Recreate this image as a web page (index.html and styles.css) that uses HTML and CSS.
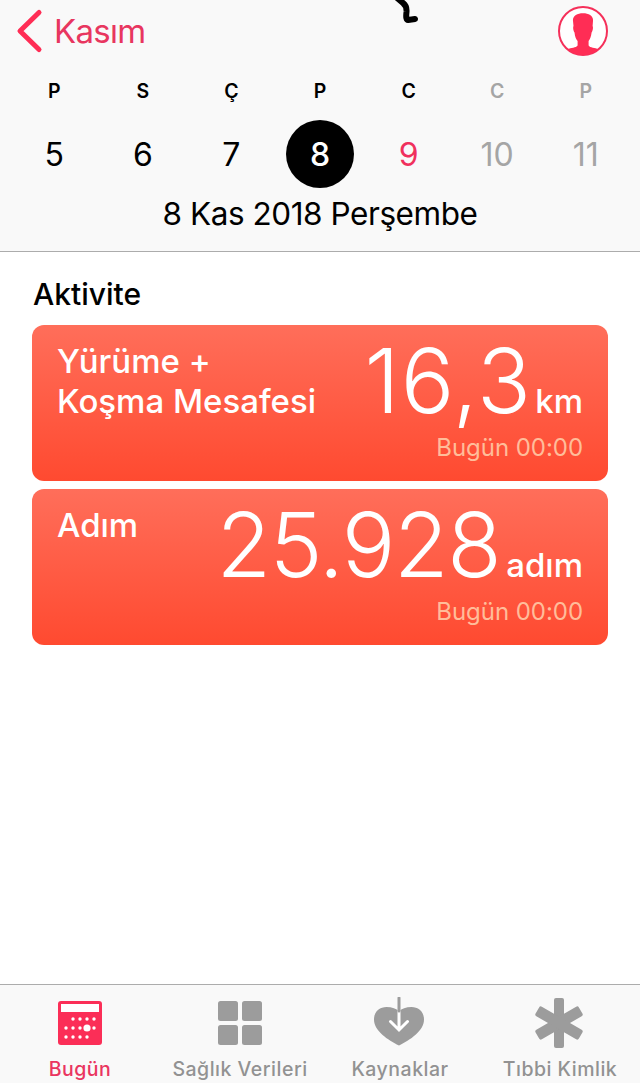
FILE: index.html
```html
<!DOCTYPE html>
<html lang="tr">
<head>
  <meta charset="UTF-8">
  <meta name="viewport" content="width=device-width, initial-scale=1.0">
  <title>Sağlık</title>
  <link rel="stylesheet" href="styles.css">
</head>
<body>
  <header class="header">
    <svg class="scribble" width="30" height="26" viewBox="0 0 30 26">
      <path d="M2 -3 L9 3 Q13 6 12.500 12 Q11.500 20 14 20 L21 19" />
    </svg>
    <div class="navbar">
      <a class="back" href="#">
        <svg width="28" height="46" viewBox="0 0 28 46">
          <path d="M23 4.500 L4 23 L23 41.500" />
        </svg>
        <span>Kasım</span>
      </a>
      <svg class="profile" width="50" height="50" viewBox="0 0 50 50">
        <circle cx="25" cy="25" r="24" />
        <path d="M25 7.200 C31 7.200 35.600 9.800 35 15 L34.600 20 C35.400 21 34.800 25 33.600 26.400 C33 31 32 33 30.600 35 V39.500 C32 42 37 41.500 40.500 43.300 A24 24 0 0 1 9.500 43.300 C13 41.500 18 42 19.600 39.500 V35 C18 33 17 31 16.500 26.400 C15.200 25 14.800 21 15.500 20 L15 15 C14.400 9.800 19 7.200 25 7.200 Z" />
      </svg>
    </div>
    <div class="week">
      <div class="day"><span class="day-name">P</span><span class="day-num">5</span></div>
      <div class="day"><span class="day-name">S</span><span class="day-num">6</span></div>
      <div class="day"><span class="day-name">Ç</span><span class="day-num">7</span></div>
      <div class="day selected"><span class="day-name">P</span><span class="day-num">8</span></div>
      <div class="day today"><span class="day-name">C</span><span class="day-num">9</span></div>
      <div class="day future"><span class="day-name">C</span><span class="day-num">10</span></div>
      <div class="day future"><span class="day-name">P</span><span class="day-num">11</span></div>
    </div>
    <p class="date">8 Kas 2018 Perşembe</p>
  </header>

  <main class="content">
    <h1>Aktivite</h1>
    <section class="card">
      <h2>Yürüme +<br>Koşma Mesafesi</h2>
      <div class="data">
        <p class="value"><span class="number distance">16,3</span><span class="unit">km</span></p>
        <p class="time">Bugün 00:00</p>
      </div>
    </section>
    <section class="card">
      <h2>Adım</h2>
      <div class="data">
        <p class="value"><span class="number">25.928</span><span class="unit">adım</span></p>
        <p class="time">Bugün 00:00</p>
      </div>
    </section>
  </main>

  <nav class="tabbar">
    <a class="tab active" href="#">
      <svg width="52" height="52" viewBox="0 0 52 52">
        <rect x="4" y="4" width="44" height="44" rx="3" />
        <g class="cut">
          <rect x="7" y="7" width="38" height="8" />
          <circle cx="19" cy="22" r="1.7" /><circle cx="26" cy="22" r="1.7" /><circle cx="33" cy="22" r="1.7" /><circle cx="40" cy="22" r="1.7" />
          <circle cx="12" cy="31" r="1.7" /><circle cx="19" cy="31" r="1.7" /><circle cx="26" cy="31" r="1.7" /><circle cx="33" cy="31" r="3.6" /><circle cx="40" cy="31" r="1.7" />
          <circle cx="12" cy="40" r="1.7" /><circle cx="19" cy="40" r="1.7" /><circle cx="26" cy="40" r="1.7" /><circle cx="33" cy="40" r="1.7" />
        </g>
      </svg>
      <span>Bugün</span>
    </a>
    <a class="tab" href="#">
      <svg width="52" height="52" viewBox="0 0 52 52">
        <rect x="4" y="4" width="20" height="20" rx="2.5" />
        <rect x="28" y="4" width="20" height="20" rx="2.5" />
        <rect x="4" y="28" width="20" height="20" rx="2.5" />
        <rect x="28" y="28" width="20" height="20" rx="2.5" />
      </svg>
      <span>Sağlık Verileri</span>
    </a>
    <a class="tab" href="#">
      <svg width="52" height="52" viewBox="0 0 52 52">
        <path d="M25 48.500 C14 43 0 34 0 22.500 C0 14 6 10 12.500 10 C18 10 22.500 11.500 25 14.500 C27.500 11.500 32 10 37.500 10 C44 10 50 14 50 22.500 C50 34 36 43 25 48.500 Z" />
        <path class="arrow" d="M25 14 V32 M16.500 24.500 L25 33 L33.500 24.500" />
        <path class="stem" d="M25 1 V14" />
      </svg>
      <span>Kaynaklar</span>
    </a>
    <a class="tab" href="#">
      <svg width="52" height="52" viewBox="0 0 52 52">
        <rect x="20" y="1" width="10" height="50" rx="2" />
        <rect x="19.500" y="1" width="11" height="50" rx="2" transform="rotate(60 25 26)" />
        <rect x="19.500" y="1" width="11" height="50" rx="2" transform="rotate(-60 25 26)" />
      </svg>
      <span>Tıbbi Kimlik</span>
    </a>
  </nav>
</body>
</html>
```
FILE: styles.css
```css
* {
  margin: 0;
  padding: 0;
  box-sizing: border-box;
}
body {
  display: flex;
  flex-direction: column;
  height: 1083px;
  background: #fff;
  color: #000;
  font-family: Inter, "Liberation Sans", Arial, sans-serif;
  overflow: hidden;
}
a {
  color: inherit;
  text-decoration: none;
}
/* Header */
.header {
  position: relative;
  height: 252px;
  background: #f9f9f9;
  border-bottom: 1px solid #acacac;
}
.scribble {
  position: absolute;
  left: 394px;
  top: 0;
  fill: none;
  stroke: #000;
  stroke-width: 6;
  stroke-linecap: round;
  stroke-linejoin: round;
}
.navbar {
  display: flex;
  justify-content: space-between;
  align-items: center;
  height: 62px;
  padding: 0 32px 0 16px;
}
.back {
  display: flex;
  align-items: center;
  gap: 10px;
  color: #e8365f;
  font-size: 33px;
  line-height: 40px;
  letter-spacing: -0.7px;
}
.back svg {
  fill: none;
  stroke: #ff2d55;
  stroke-width: 5;
  stroke-linecap: round;
  stroke-linejoin: round;
}
.profile circle {
  fill: #fff;
  stroke: #f5305a;
  stroke-width: 2;
}
.profile path {
  fill: #ff2d55;
}
/* Week strip */
.week {
  display: grid;
  grid-template-columns: repeat(7, 1fr);
  padding: 18px 10px 0;
}
.day {
  display: flex;
  flex-direction: column;
  align-items: center;
  gap: 18px;
}
.day-name {
  font-size: 19.5px;
  font-weight: 600;
  line-height: 22px;
}
.day-num {
  width: 68px;
  height: 68px;
  border-radius: 50%;
  font-size: 32px;
  line-height: 70px;
  text-align: center;
}
.selected .day-num {
  background: #000;
  color: #fff;
  font-weight: 500;
}
.today .day-num {
  color: #f0315d;
}
.future {
  color: #a5a5a5;
}
.date {
  margin-top: 6px;
  font-size: 31.5px;
  line-height: 40px;
  letter-spacing: -0.45px;
  text-align: center;
}
/* Activity cards */
.content {
  flex: 1;
  padding: 22px 32px 0;
}
h1 {
  margin-bottom: 11px;
  padding-left: 1px;
  font-size: 30px;
  font-weight: 500;
  line-height: 40px;
}
.card {
  display: flex;
  justify-content: space-between;
  height: 156px;
  margin-bottom: 8px;
  padding: 16px 25px;
  border-radius: 12px;
  background: linear-gradient(#ff6e5a, #ff4a30);
  color: #fff;
}
h2 {
  font-size: 33px;
  font-weight: 500;
  line-height: 40px;
  white-space: nowrap;
}
.data {
  text-align: right;
}
.value {
  display: flex;
  justify-content: flex-end;
  align-items: baseline;
  gap: 6px;
  height: 80px;
  white-space: nowrap;
}
.number {
  font-size: 89px;
  font-weight: 300;
  line-height: 80px;
  letter-spacing: -1.4px;
}
.distance {
  letter-spacing: 1.4px;
  margin-right: -3px;
}
.unit {
  font-size: 33px;
  font-weight: 500;
  line-height: 40px;
}
.time {
  margin-top: 12px;
  color: #ffbd9a;
  font-size: 24px;
  line-height: 29px;
  letter-spacing: -0.05px;
}
/* Tab bar */
.tabbar {
  display: grid;
  grid-template-columns: repeat(4, 1fr);
  height: 99px;
  background: #f9f9f9;
  border-top: 1px solid #acacac;
}
.tab {
  display: flex;
  flex-direction: column;
  align-items: center;
  gap: 8px;
  padding-top: 12px;
  color: #929292;
  font-size: 19.5px;
  font-weight: 500;
  line-height: 24px;
  letter-spacing: 0.5px;
  white-space: nowrap;
}
.tab svg {
  fill: #9c9c9c;
}
.tab.active {
  color: #ea3560;
}
.tab.active svg {
  fill: #fb2e57;
}
.tab .cut {
  fill: #fff;
}
.tab .arrow {
  fill: none;
  stroke: #fff;
  stroke-width: 3;
  stroke-linecap: round;
}
.tab .stem {
  fill: none;
  stroke: #9c9c9c;
  stroke-width: 3;
  stroke-linecap: round;
}
```
